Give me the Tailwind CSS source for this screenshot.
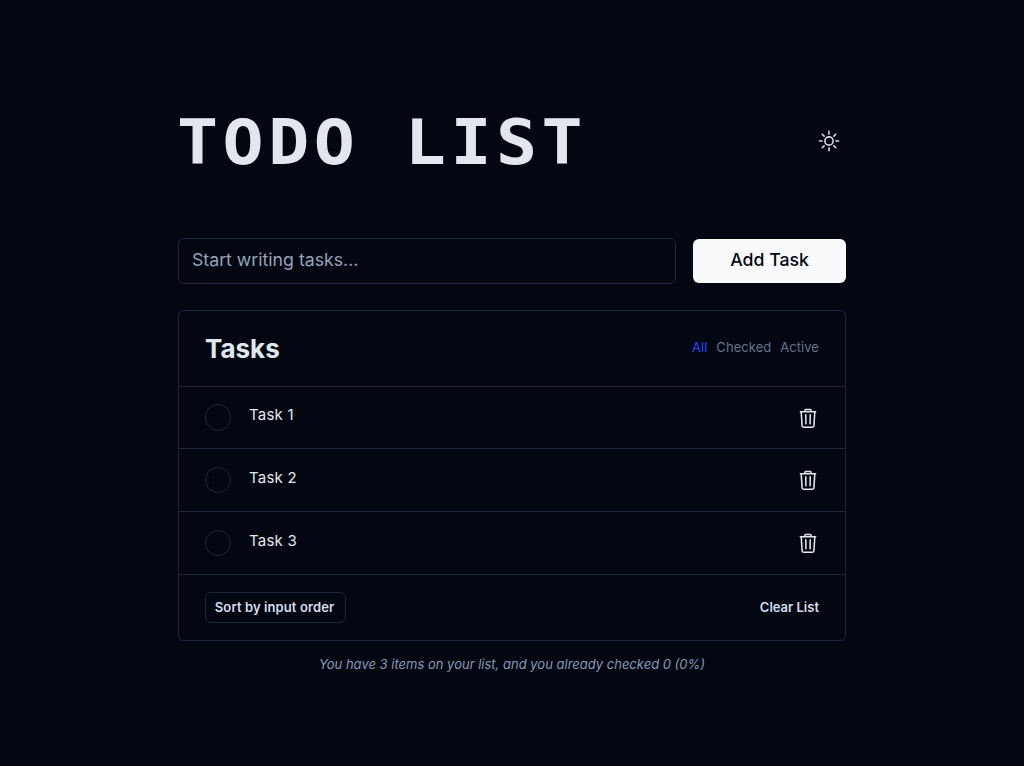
<!DOCTYPE html>
<html lang="en"><head><meta charset="utf-8"><title>Todo List</title>
<script src="https://cdn.jsdelivr.net/npm/@tailwindcss/browser@4"></script></head>
<body class="h-[766px] overflow-hidden bg-[#020711] font-['Inter',sans-serif] text-[#e1e7ef]">
<svg class="hidden"><symbol id="trash" viewBox="0 0 512 512" fill="none" stroke="currentColor" stroke-linecap="round" stroke-linejoin="round" stroke-width="36"><path d="M98 112l20 326c.95 18.490 14.400 32 32 32h212c17.670 0 30.870-13.510 32-32l20-326M78 112h356M182 112V82a24 24 0 0 1 24-24h100a24 24 0 0 1 24 24v30M204 180l4 212M308 180l-4 212"/></symbol></svg>
<main class="mx-auto flex w-[668px] flex-col pt-[104px]">
<header class="flex h-[76px] items-center justify-between">
<h1 class="-ml-[1px] origin-left scale-x-110 pt-[1px] font-['DejaVu_Sans_Mono',monospace] text-[62px] leading-[76px] font-bold tracking-[4.1px] whitespace-pre">TODO LIST</h1>
<button class="mr-[6px] mb-[3px]"><svg class="size-[22px]" viewBox="0 0 512 512" fill="none" stroke="#d3ddec" stroke-width="36" stroke-linecap="round"><circle cx="256" cy="256" r="96"/><path d="M256 32v64M256 416v64M32 256h64M416 256h64M98 98l45 45M369 369l45 45M98 414l45-45M369 143l45-45"/></svg></button>
</header>
<form class="mt-[58px] flex h-[46px] items-center justify-between">
<input class="h-[46px] w-[498px] rounded-md border border-[#1d283a] px-[13px] pb-[3px] text-[17.7px] placeholder:text-[#94a3b8]" placeholder="Start writing tasks...">
<button type="button" class="h-11 w-[153px] rounded-md bg-[#f8fafc] pb-[2px] text-[17.7px] font-medium text-[#020711]">Add Task</button>
</form>
<section class="mt-[26px] h-[331px] rounded-md border border-[#1d283a]">
<div class="flex h-[75px] items-center justify-between px-[26px]"><h2 class="text-[26px] font-bold">Tasks</h2><div class="flex gap-[9px] pb-[2px] text-[13px] tracking-[0.05px] text-[#64748b]"><span class="text-[#1f4bff]">All</span><span>Checked</span><span>Active</span></div></div>
<div class="flex h-[62px] items-center border-t border-[#1d283a] px-[26px] text-[15px] tracking-[0.2px]"><span class="h-[27px] w-[26px] rounded-full border border-[#1d283a]"></span><span class="ml-[18px] flex-1 pb-[5px]">Task 1</span><svg class="size-[22px]"><use href="#trash"/></svg></div>
<div class="flex h-[63px] items-center border-t border-[#1d283a] px-[26px] text-[15px] tracking-[0.2px]"><span class="size-[26px] rounded-full border border-[#1d283a]"></span><span class="ml-[18px] flex-1 pb-[4px]">Task 2</span><svg class="size-[22px]"><use href="#trash"/></svg></div>
<div class="flex h-[63px] items-center border-t border-[#1d283a] px-[26px] text-[15px] tracking-[0.2px]"><span class="size-[26px] rounded-full border border-[#1d283a]"></span><span class="ml-[18px] flex-1 pb-[4px]">Task 3</span><svg class="size-[22px]"><use href="#trash"/></svg></div>
<div class="flex h-[66px] items-center justify-between border-t border-[#1d283a] px-[26px] text-[13px] font-semibold text-[#d3ddec]"><button class="h-[31px] w-[141px] rounded-md border border-[#1d283a] pr-[2px] tracking-[0.1px] whitespace-nowrap">Sort by input order</button><button>Clear List</button></div>
</section>
<p class="mt-[13px] text-center text-[13px] leading-5 italic text-[#869ab5]">You have 3 items on your list, and you already checked 0 (0%)</p>
</main></body></html>
